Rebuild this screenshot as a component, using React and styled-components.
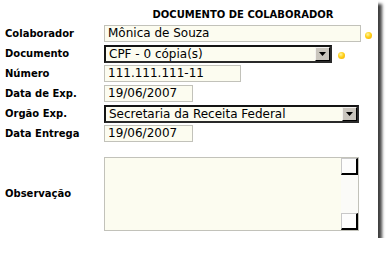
import React from 'react';
import styled, { createGlobalStyle } from 'styled-components';

const GlobalStyle = createGlobalStyle`
  body {
    margin: 0;
    background: #fff;
    font-family: "DejaVu Sans", Verdana, sans-serif;
  }
`;

const Panel = styled.div`
  width: 378px;
  height: 238px;
  box-sizing: border-box;
  padding: 0 0 7px 5px;
  background: #fff;
  box-shadow: 4px 4px 3px rgba(0, 0, 0, 0.75);
`;

const Title = styled.div`
  height: 24px;
  box-sizing: border-box;
  padding: 9px 0 0 103px;
  text-align: center;
  font-size: 10px;
  font-weight: bold;
  line-height: 12px;
  color: #000;
`;

const Row = styled.div`
  display: flex;
  align-items: ${p => (p.tall ? 'center' : 'flex-start')};
  height: ${p => (p.tall ? '74px' : '20px')};
  box-sizing: border-box;
  padding-top: ${p => (p.tall ? '0' : '1px')};
  margin-top: ${p => (p.tall ? '13px' : '0')};
`;

const Label = styled.div`
  width: 99px;
  flex: none;
  font-size: 10px;
  font-weight: bold;
  color: #000;
  line-height: ${p => (p.tall ? '12px' : '18px')};
`;

const Input = styled.div`
  width: ${p => p.w}px;
  height: 17px;
  box-sizing: border-box;
  border: 1px solid #c2c2ba;
  background: #fcfcf0;
  padding-left: 3px;
  font-size: 12px;
  line-height: 15px;
  color: #000;
  white-space: nowrap;
  overflow: hidden;
`;

const Select = styled.div`
  width: ${p => p.w}px;
  height: 18px;
  box-sizing: border-box;
  border: 2px solid #141414;
  border-right-color: #2a2a2a;
  border-bottom-color: #2a2a2a;
  background: #fcfcf0;
  display: flex;
  align-items: stretch;
`;

const SelectText = styled.div`
  flex: 1;
  padding-left: 3px;
  font-size: 12px;
  line-height: 14px;
  color: #000;
  white-space: nowrap;
  overflow: hidden;
`;

const ArrowButton = styled.div`
  width: 15px;
  flex: none;
  box-sizing: border-box;
  background: #c9c5bd;
  border-top: 1px solid #f4f2ee;
  border-left: 1px solid #f4f2ee;
  border-right: 1px solid #000;
  border-bottom: 1px solid #000;
  display: flex;
  align-items: center;
  justify-content: center;
`;

const Dot = styled.span`
  display: block;
  width: 7px;
  height: 7px;
  flex: none;
  margin: 7px 0 0 ${p => p.gap}px;
  border-radius: 50%;
  background: radial-gradient(circle at 40% 35%, #fff4a0 0%, #ffd21a 45%, #f0a400 100%);
`;

const TextArea = styled.div`
  width: 255px;
  height: 74px;
  box-sizing: border-box;
  border: 1px solid #c2c2ba;
  background: #fcfcf0;
  display: flex;
  justify-content: flex-end;
`;

const ScrollTrack = styled.div`
  width: 17px;
  background: #fbfbf8;
  display: flex;
  flex-direction: column;
  justify-content: space-between;
`;

const ScrollButton = styled.div`
  width: 17px;
  height: 17px;
  box-sizing: border-box;
  background: #fdfdfd;
  border-top: 1px solid #c8c8c8;
  border-left: 1px solid #c8c8c8;
  border-right: 2px solid #000;
  border-bottom: 2px solid #000;
`;

const Arrow = () => (
  <svg width="7" height="4" viewBox="0 0 7 4">
    <polygon points="0,0 7,0 3.5,4" fill="#000" />
  </svg>
);

const App = () => (
  <>
    <GlobalStyle />
    <Panel>
      <Title>DOCUMENTO DE COLABORADOR</Title>
      <Row>
        <Label>Colaborador</Label>
        <Input w={257}>Mônica de Souza</Input>
        <Dot gap={4} />
      </Row>
      <Row>
        <Label>Documento</Label>
        <Select w={228}>
          <SelectText>CPF - 0 cópia(s)</SelectText>
          <ArrowButton><Arrow /></ArrowButton>
        </Select>
        <Dot gap={6} />
      </Row>
      <Row>
        <Label>Número</Label>
        <Input w={137}>111.111.111-11</Input>
      </Row>
      <Row>
        <Label>Data de Exp.</Label>
        <Input w={89}>19/06/2007</Input>
      </Row>
      <Row>
        <Label>Orgão Exp.</Label>
        <Select w={255}>
          <SelectText>Secretaria da Receita Federal</SelectText>
          <ArrowButton><Arrow /></ArrowButton>
        </Select>
      </Row>
      <Row>
        <Label>Data Entrega</Label>
        <Input w={89}>19/06/2007</Input>
      </Row>
      <Row tall>
        <Label tall>Observação</Label>
        <TextArea>
          <ScrollTrack>
            <ScrollButton />
            <ScrollButton />
          </ScrollTrack>
        </TextArea>
      </Row>
    </Panel>
  </>
);

export default App;
